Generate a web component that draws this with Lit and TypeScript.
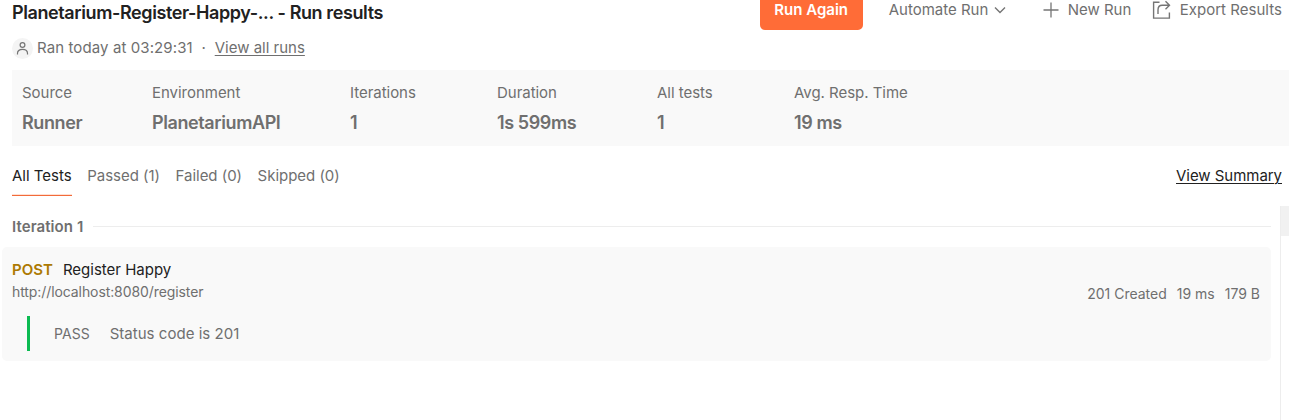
import { LitElement, html, css } from "lit";
import { customElement } from "lit/decorators.js";

const STATS = [
  ["Source", "Runner"],
  ["Environment", "PlanetariumAPI"],
  ["Iterations", "1"],
  ["Duration", "1s 599ms"],
  ["All tests", "1"],
  ["Avg. Resp. Time", "19 ms"],
];

const TABS = ["All Tests", "Passed (1)", "Failed (0)", "Skipped (0)"];

@customElement("app-root")
export class AppRoot extends LitElement {
  static styles = css`
    :host {
      display: flex;
      flex-direction: column;
      height: 420px;
      overflow: hidden;
      background: #fff;
      color: #6f6f6f;
      font: 400 15px/20px Inter, sans-serif;
      white-space: nowrap;
    }
    * { box-sizing: border-box; }
    svg { display: block; flex: none; fill: none; stroke: #757575; }
    .header { display: flex; height: 70px; flex: none; padding-left: 12px; }
    .heading { flex: 1; }
    .title { margin: 3px 0 0; font-size: 18px; line-height: 20px; font-weight: 600; color: #212121; letter-spacing: -0.4px; }
    .meta { display: flex; align-items: center; margin-top: 15px; height: 20px; }
    .avatar { width: 21px; height: 21px; border-radius: 50%; background: #f4f4f4; display: grid; place-items: center; margin-right: 4px; }
    .ran { letter-spacing: 0.1px; }
    .dot { width: 22px; text-align: center; }
    .link { text-decoration: underline; text-underline-offset: 2px; text-decoration-thickness: 1px; }
    .actions { display: flex; height: 20px; align-items: center; padding-right: 7px; }
    .run { width: 103px; height: 40px; margin: -10px 26px 0 0; padding: 0; border: 0; border-radius: 5px; background: #ff6c37; color: #fff; font: 600 15px/20px Inter, sans-serif; align-self: flex-start; }
    .action { display: flex; align-items: center; height: 20px; }
    .automate { gap: 6px; width: 154px; }
    .new { gap: 9px; width: 109px; }
    .export { gap: 9px; letter-spacing: 0.03px; }
    .stats { display: grid; grid-template-columns: 130px 198px 147px 160px 137px 1fr; height: 76px; flex: none; margin-left: 12px; padding: 13px 10px 0; background: #f9f9f9; }
    .label { letter-spacing: -0.03px; }
    .value { margin-top: 8px; font-size: 18px; line-height: 24px; font-weight: 600; letter-spacing: -0.4px; }
    .tabs { display: flex; gap: 15.5px; height: 60px; flex: none; padding: 20px 7px 0 12px; }
    .tab { height: 30px; }
    .tab + .tab { letter-spacing: -0.02px; }
    .active { color: #212121; border-bottom: 1px solid #f26b3a; box-shadow: inset 0 -1px #ffe0d3; }
    .summary { margin-left: auto; color: #212121; height: 20px; letter-spacing: -0.04px; }
    .body { display: flex; flex: 1; justify-content: space-between; }
    .results { width: 1269px; margin-left: 2px; }
    .iteration { display: flex; align-items: center; gap: 10px; padding: 11px 0 0 10px; height: 31px; font-weight: 600; letter-spacing: 0.08px; }
    .rule { flex: 1; height: 1px; margin-top: -2px; background: #ededed; }
    .card { margin-top: 10px; height: 114px; padding: 13px 11px 0 10px; border-radius: 5px; background: #f9f9f9; }
    .request { display: flex; justify-content: space-between; height: 44px; }
    .name { display: flex; gap: 10px; color: #212121; }
    .method { color: #ad7a03; font-weight: 600; }
    .url { margin-top: 2px; font-size: 14px; line-height: 20px; letter-spacing: -0.09px; }
    .info { display: flex; gap: 10px; padding-top: 24px; font-size: 14px; }
    .test { display: flex; align-items: center; gap: 20px; margin: 12px 0 0 15px; height: 35px; padding-left: 24px; border-left: 3px solid #0cbb52; letter-spacing: 0.03px; }
    .pass { font-size: 14px; }
    .scroll { width: 9px; border-left: 1px solid #ededed; }
    .thumb { height: 30px; background: #f1f1f1; }
  `;

  render() {
    return html`
      <header class="header">
        <div class="heading">
          <h1 class="title">Planetarium-Register-Happy-... - Run results</h1>
          <div class="meta">
            <span class="avatar">
              <svg width="13" height="15" viewBox="0 0 13 15" stroke-width="1.2"><circle cx="6.5" cy="4" r="2.4" /><path d="M1.500 13.500V12.300C1.500 10 3.500 8.300 6.500 8.300s5 1.700 5 4v1.200" /></svg>
            </span>
            <span class="ran">Ran today at 03:29:31</span><span class="dot">·</span><span class="link">View all runs</span>
          </div>
        </div>
        <div class="actions">
          <button class="run">Run Again</button>
          <span class="action automate">Automate Run
            <svg width="12" height="8" viewBox="0 0 12 8" stroke-width="1.4"><path d="M1 1.500l5 5 5-5" /></svg>
          </span>
          <span class="action new">
            <svg width="16" height="16" viewBox="0 0 16 16" stroke-width="1.3"><path d="M8 .5v15M.5 8h15" /></svg>New Run
          </span>
          <span class="action export">
            <svg width="19" height="20" viewBox="0 0 19 20" stroke-width="1.4"><path d="M7.500 2.200H1.600v15.900h15.800v-5.500M6 14V10C6 7 7.600 5.300 10.200 5.300H17.200M13.500 1.300l4 4-4 4" /></svg>Export Results
          </span>
        </div>
      </header>
      <section class="stats">
        ${STATS.map(([k, v]) => html`<div><div class="label">${k}</div><div class="value">${v}</div></div>`)}
      </section>
      <nav class="tabs">
        ${TABS.map((t, i) => html`<span class="tab ${i === 0 ? "active" : ""}">${t}</span>`)}
        <span class="summary link">View Summary</span>
      </nav>
      <main class="body">
        <div class="results">
          <div class="iteration"><span>Iteration 1</span><span class="rule"></span></div>
          <div class="card">
            <div class="request">
              <div>
                <div class="name"><span class="method">POST</span><span>Register Happy</span></div>
                <div class="url">http://localhost:8080/register</div>
              </div>
              <div class="info"><span>201 Created</span><span>19 ms</span><span>179 B</span></div>
            </div>
            <div class="test"><span class="pass">PASS</span><span>Status code is 201</span></div>
          </div>
        </div>
        <div class="scroll"><div class="thumb"></div></div>
      </main>
    `;
  }
}
